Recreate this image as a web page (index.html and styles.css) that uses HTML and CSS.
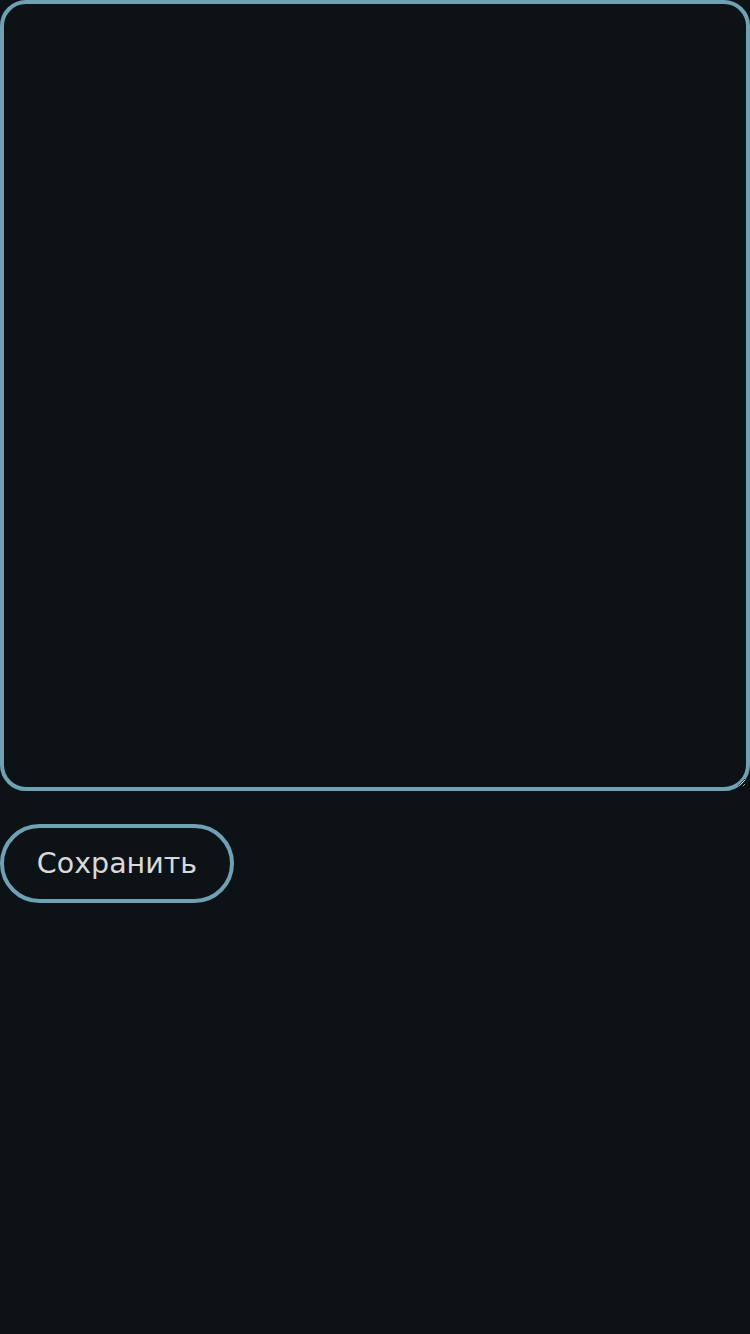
FILE: index.html
```html
<!DOCTYPE html>
<html lang="ru">
<head>
<meta charset="utf-8">
<link rel="stylesheet" href="styles.css">
</head>
<body>
<form class="editor">
<textarea class="note"></textarea>
<button type="button" class="save">Сохранить</button>
</form>
</body>
</html>
```
FILE: styles.css
```css
html, body {
  margin: 0;
  padding: 0;
  background: #0c1215;
  font-family: "DejaVu Sans", sans-serif;
}
.editor {
  display: flex;
  flex-direction: column;
  align-items: flex-start;
  gap: 33px;
}
.note {
  display: block;
  box-sizing: border-box;
  width: 750px;
  height: 791px;
  margin: 0;
  background: #0c1215;
  color: #d8d8d8;
  border: 4px solid #6fa1b5;
  border-radius: 26px;
  outline: none;
  resize: both;
  font-family: "DejaVu Sans", sans-serif;
  font-size: 28px;
}
.save {
  box-sizing: border-box;
  width: 234px;
  height: 79px;
  margin: 0;
  padding: 0;
  background: #0c1215;
  color: #d9d9d9;
  border: 4px solid #6fa1b5;
  border-radius: 40px;
  font-family: "DejaVu Sans", sans-serif;
  font-size: 28.5px;
}
```
